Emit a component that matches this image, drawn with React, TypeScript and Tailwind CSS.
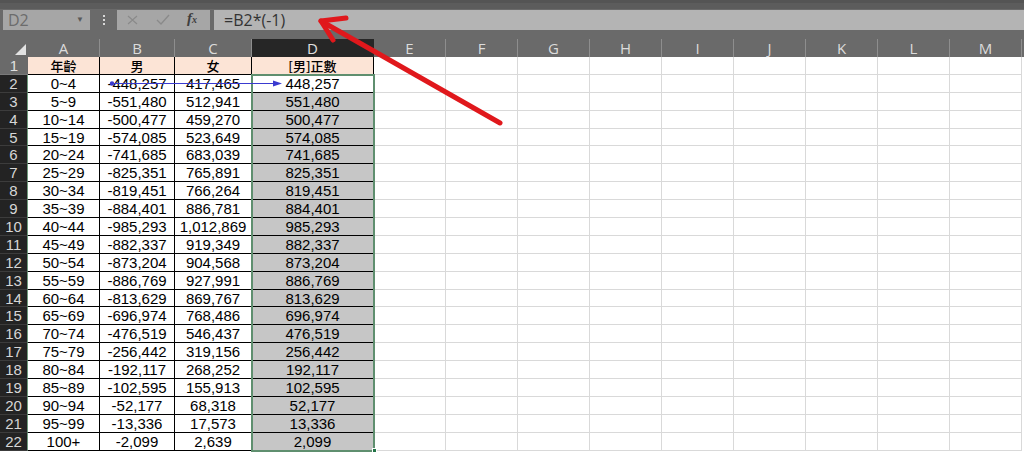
const rows = [
  ['0~4', '-448,257', '417,465', '448,257'],
  ['5~9', '-551,480', '512,941', '551,480'],
  ['10~14', '-500,477', '459,270', '500,477'],
  ['15~19', '-574,085', '523,649', '574,085'],
  ['20~24', '-741,685', '683,039', '741,685'],
  ['25~29', '-825,351', '765,891', '825,351'],
  ['30~34', '-819,451', '766,264', '819,451'],
  ['35~39', '-884,401', '886,781', '884,401'],
  ['40~44', '-985,293', '1,012,869', '985,293'],
  ['45~49', '-882,337', '919,349', '882,337'],
  ['50~54', '-873,204', '904,568', '873,204'],
  ['55~59', '-886,769', '927,991', '886,769'],
  ['60~64', '-813,629', '869,767', '813,629'],
  ['65~69', '-696,974', '768,486', '696,974'],
  ['70~74', '-476,519', '546,437', '476,519'],
  ['75~79', '-256,442', '319,156', '256,442'],
  ['80~84', '-192,117', '268,252', '192,117'],
  ['85~89', '-102,595', '155,913', '102,595'],
  ['90~94', '-52,177', '68,318', '52,177'],
  ['95~99', '-13,336', '17,573', '13,336'],
  ['100+', '-2,099', '2,639', '2,099'],
]

const letters = ['A', 'B', 'C', 'D', 'E', 'F', 'G', 'H', 'I', 'J', 'K', 'L', 'M']
const widths = ['w-[72px]', 'w-[75px]', 'w-[77px]', 'w-[122px]', 'w-[72px]', 'w-[72px]', 'w-[72px]', 'w-[72px]', 'w-[72px]', 'w-[72px]', 'w-[72px]', 'w-[72px]', 'w-[72px]']
const empties = ['E', 'F', 'G', 'H', 'I', 'J', 'K', 'L', 'M']

function App() {
  return (
    <div className="relative w-[1024px] h-[454px] overflow-hidden bg-white font-['Liberation_Sans',sans-serif]">
      {/* formula bar */}
      <div className="bg-[#6a6a6a]">
        <div className="h-[9px] bg-[#5c5c5c] border-t-[3px] border-[#545454]" />
        <div className="h-[30px] flex items-start pt-[1px]">
          <div className="ml-[3px] w-[87px] h-[20px] bg-[#a6a6a6] flex items-center justify-between pl-[5px] pr-[6px]">
            <span className="text-[16px] leading-none text-[#6c6c6c] font-['Open_Sans',sans-serif]">D2</span>
            <span className="text-[8px] leading-none text-[#5a5a5a]">▼</span>
          </div>
          <div className="w-[27px] h-[20px] flex flex-col items-center justify-center gap-[2px]">
            <span className="w-[2px] h-[2px] bg-[#d8d8d8]" />
            <span className="w-[2px] h-[2px] bg-[#d8d8d8]" />
            <span className="w-[2px] h-[2px] bg-[#d8d8d8]" />
          </div>
          <div className="relative w-[93px] h-[20px] bg-[#a6a6a6] flex items-center">
            <svg width="93" height="20" viewBox="0 0 93 20">
              <path d="M11 6 L20 14 M20 6 L11 14" stroke="#8a8a8a" strokeWidth="1.2" fill="none" />
              <path d="M40 10 L44 14 L52 5" stroke="#8a8a8a" strokeWidth="1.3" fill="none" />
            </svg>
            <span className="absolute left-[70px] top-[1px] text-[15px] leading-none italic text-[#3e3e3e] font-['Liberation_Serif',serif] font-bold">
              f<span className="text-[10px]">x</span>
            </span>
          </div>
          <div className="ml-[4px] flex-1 h-[20px] bg-[#b4b4b4] flex items-center pl-[10px]">
            <span className="text-[16px] leading-none text-[#333] font-['Open_Sans',sans-serif]">=B2*(-1)</span>
          </div>
        </div>

        {/* column headers */}
        <div className="flex h-[18px] font-['Open_Sans',sans-serif]">
          <div className="w-[28px] h-[18px] relative">
            <svg width="28" height="18" className="absolute inset-0">
              <polygon points="15,16 26,16 26,5" fill="#e2e2e2" />
            </svg>
          </div>
          {letters.map((l, i) => (
            <div
              key={l}
              className={`${widths[i]} h-[18px] flex items-center justify-center text-[15px] leading-none border-r ${
                l === 'D' ? 'bg-[#262626] text-[#e0e0e0] border-[#262626]' : 'text-[#dcdcdc] border-[#8e8e8e]'
              }`}
            >
              {l}
            </div>
          ))}
          <div className="flex-1" />
        </div>
      </div>

      {/* grid */}
      <div>
        <div className="flex h-[17.9px]">
          <div className="w-[28px] bg-[#6a6a6a] text-[#e0e0e0] flex items-center justify-center text-[15px] leading-none border-b border-[#7a7a7a]">
            1
          </div>
          {['年齡', '男', '女', '[男]正數'].map((t, i) => (
            <div
              key={t}
              className={`${widths[i]} bg-[#fce4d6] border-r border-b border-black flex items-center justify-center text-[13px] leading-none text-black font-['Noto_Sans_CJK_TC',sans-serif] font-medium`}
            >
              {t}
            </div>
          ))}
          {empties.map((e) => (
            <div key={e} className="w-[72px] border-r border-b border-[#d9d9d9]" />
          ))}
        </div>
        {rows.map((r, ri) => (
          <div key={ri} className="flex h-[17.9px]">
            <div className="w-[28px] bg-[#232323] text-[#d6d6d6] flex items-center justify-center text-[15px] leading-none border-b border-[#3c3c3c] border-r border-r-[#6f9a7c]">
              {ri + 2}
            </div>
            {r.map((v, ci) => (
              <div
                key={ci}
                className={`${widths[ci]} border-r border-b border-black flex items-center justify-center text-[15px] leading-none text-black ${
                  ci === 3 ? (ri === 0 ? 'bg-white' : 'bg-[#c6c6c6]') : 'bg-white'
                }`}
              >
                {v}
              </div>
            ))}
            {empties.map((e) => (
              <div key={e} className="w-[72px] border-r border-b border-[#d9d9d9]" />
            ))}
          </div>
        ))}
      </div>

      {/* selection D2:D22 */}
      <div className="absolute left-[251px] top-[74px] w-[124px] h-[378px] border-2 border-[#5f8f6f]" />
      <div className="absolute left-[372px] top-[448px] w-[5px] h-[5px] bg-[#217346] border border-white" />

      {/* overlays */}
      <svg className="absolute inset-0 pointer-events-none" width="1024" height="454">
        <line x1="112" y1="83.5" x2="274" y2="83.5" stroke="#3a3ad0" strokeWidth="1.2" />
        <circle cx="112" cy="83.5" r="2.2" fill="#3a3ad0" />
        <polygon points="273,80.5 282,83.5 273,86.5" fill="#3a3ad0" />
        <path d="M500 123 L321 21" stroke="#e0181c" strokeWidth="5" strokeLinecap="round" fill="none" />
        <path
          d="M346 18 L321 21 L333 40"
          stroke="#e0181c"
          strokeWidth="5"
          strokeLinecap="round"
          strokeLinejoin="round"
          fill="none"
        />
      </svg>
    </div>
  )
}

export default App
